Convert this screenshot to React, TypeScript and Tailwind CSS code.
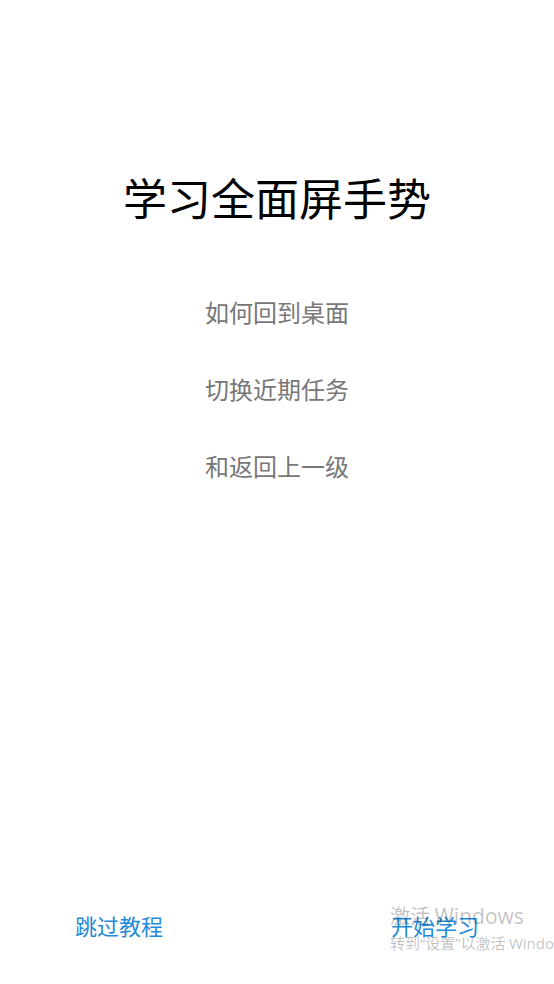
export default function App() {
  const lines = ['如何回到桌面', '切换近期任务', '和返回上一级'];
  const latin = { fontFamily: '"Open Sans", "Noto Sans", sans-serif' };

  return (
    <div
      className="relative flex h-[984px] w-full flex-col overflow-hidden bg-white"
      style={{ fontFamily: '"Noto Sans CJK SC", "Noto Sans", sans-serif' }}
    >
      {/* Title */}
      <h1 className="mt-[175px] text-center text-[44px] leading-none font-normal text-black">
        学习全面屏手势
      </h1>

      {/* Description lines */}
      <div className="mt-[81px] flex flex-col items-center gap-[53px]">
        {lines.map((l) => (
          <p key={l} className="text-[24px] leading-none text-[#777777]">
            {l}
          </p>
        ))}
      </div>

      {/* Bottom actions */}
      <div className="mt-auto flex items-center justify-between px-[75px] pb-[48px]">
        <button className="text-[22px] leading-none text-[#1f8ad6]">跳过教程</button>
        <button className="text-[22px] leading-none text-[#1f8ad6]">开始学习</button>
      </div>

      {/* Windows activation watermark */}
      <div className="pointer-events-none absolute left-[390px] top-[906px] whitespace-nowrap text-black/25">
        <div className="text-[20px] leading-none">
          激活 <span style={latin} className="text-[21px]">Windows</span>
        </div>
        <div className="mt-[8px] text-[15px] leading-none">
          转到<span style={latin}>“</span>设置<span style={latin}>”</span>以激活{' '}
          <span style={latin}>Windows。</span>
        </div>
      </div>
    </div>
  );
}
